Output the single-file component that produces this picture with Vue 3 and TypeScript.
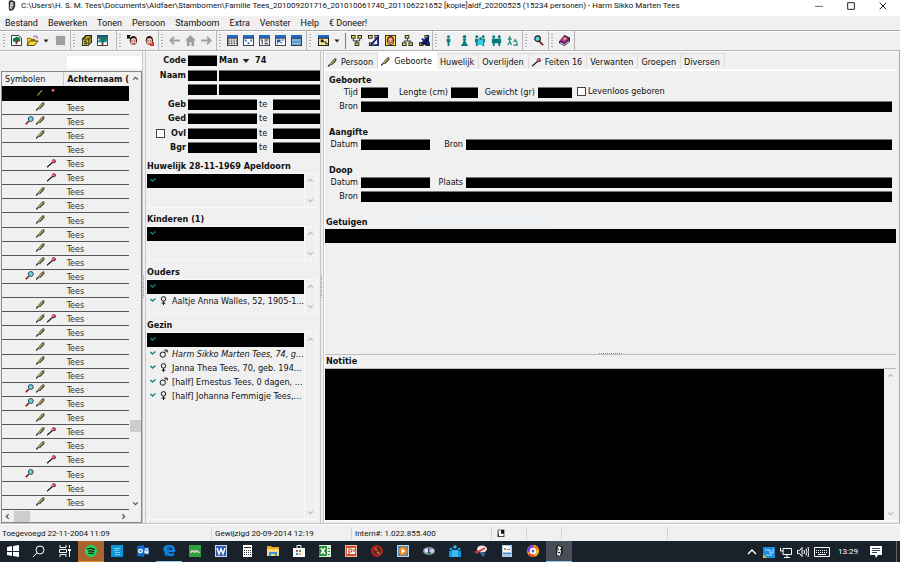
<script setup lang="ts">
import { ref } from 'vue'

interface Person { mark: string; text: string; own?: boolean }
interface Section { title: string; rows: Person[]; grow?: boolean }
interface Tool { icon: string; label: string; kind?: string }

const windowIcon = (inner: string, bg = '#fff') =>
  `<path fill="#334" d="M0 1h12v11H0z"/><path fill="#2468c8" d="M0 0h12v3H0z"/><path fill="${bg}" d="M1 4h10v7H1z"/>${inner}`
const face = '<ellipse cx="7" cy="6" rx="4" ry="5" fill="#2b1712"/><ellipse cx="7" cy="7" rx="3" ry="3.6" fill="#f2c0a8"/><path fill="#400" d="M5 6h1v1H5zM8 6h1v1H8z"/><path fill="#c22" d="M6 9h3v1H6z"/>'
const node = (x: number, y: number) => `<path fill="#222" d="M${x} ${y}h5v4h-5z"/><path fill="#e2da48" d="M${x + 1} ${y + 1}h3v2h-3z"/>`
const person = (x: number, s: string) => `<circle cx="${x}" cy="2" r="1.6" fill="${s}"/><path fill="${s}" d="M${x - 2} 4h4v4h-1v4h-2V8h-1z"/>`

const icons: Record<string, string> = {
  app: '<path fill="#333" d="M3 1l3-1 4 2v5l-2 4-4 1-1-3z"/><path fill="#ddd" d="M5 2l3 1v3l-2 4-2-1z"/><path fill="#222" d="M5 4h1v1H5zM7 4h1v1H7zM5 7h2v1H5z"/>',
  pen: '<path fill="#555" d="M0 12l1-3 7-8 3-1v3l-7 6-2 1z"/><path fill="#111" d="M0 12l1-3 2 1zM4 9l7-7v1.500L5 9.500z"/><path fill="#d8d030" d="M3 8l6-6 1 .8-6 6z"/>',
  penSel: '<path stroke="#c8c030" stroke-width="1.400" d="M2 10l6-7"/>',
  pin: '<path stroke="#111" stroke-width="1.400" d="M0 11l8-7"/><circle cx="9" cy="3" r="2.700" fill="#5c1060"/><circle cx="9" cy="3" r="1.700" fill="#e0249c"/><path fill="#f7c02c" d="M7 2h2v2H7z"/>',
  pinSel: '<circle cx="8" cy="3" r="2" fill="#c0249c"/><path fill="#f7c02c" d="M7 2h2v2H7z"/>',
  mag: '<path stroke="#7c1414" stroke-width="2.200" d="M1 11l4-4"/><circle cx="7.700" cy="4" r="3.300" fill="#5adbe0" stroke="#334" stroke-width="1.200"/>',
  treeDoc: '<path fill="#fff" stroke="#222" d="M.5.5h8l3 3v8H.5z"/><path fill="#127a3c" d="M3 3h2V2h3v1h2v4H8v1H4V7H2V5z"/><path fill="#833" d="M5 6h2v4H5z"/>',
  folder: '<path fill="#8a7410" d="M0 3h4l1 1h4v7H0z"/><path fill="#f8dc3c" d="M1 4h3v2h7l-3 4H1z"/><path fill="#f8dc3c" stroke="#443a08" d="M0 11.500h8l4-5H3z"/><path fill="none" stroke="#7a2ca0" d="M7 2q2-2 4 0v2"/>',
  square: '<path fill="#a0a0a0" d="M1 1h10v10H1z"/>',
  safe: '<path fill="#222" d="M1 4l4-4h7v8l-4 4H1z"/><path fill="#f2e23a" d="M2 5h6v6H2z"/><path fill="#b4a018" d="M3 4l3-3h5L8 4zM9 5l2-3v6l-2 2z"/><path fill="#222" d="M3 6h4v1H5v1h2v2H3V9h2V8H3z"/>',
  treeWin: '<path fill="#17557c" d="M0 0h12v3H0z"/><path fill="#fff" stroke="#222" d="M.5 3.500h11v8H.5z"/><path fill="#0c7d62" d="M2 6l2-3h6l1 3-2 2H3z"/><path fill="#733" d="M5 7h2v4H5z"/><path fill="#18a0c0" d="M1 6h4v2H1zM8 6h4v2H8z"/>',
  faceUp: face + '<path fill="#111" d="M0 0h4v1H3v1l2 2-1 1-2-2v1H0z"/>',
  faceDown: face + '<path fill="#e22" d="M12 12V7l-5 5z"/>',
  left: '<path fill="#a0a0a0" d="M0 6l5-5 1 2-2 2h8v2H4l2 2-1 2z"/>',
  house: '<path fill="#a0a0a0" d="M6 0l6 6h-2v6H7V8H5v4H2V6H0z"/>',
  right: '<path fill="#a0a0a0" d="M12 6L7 1 6 3l2 2H0v2h8L6 9l1 2z"/>',
  win1: windowIcon('<path stroke="#111" stroke-dasharray="2 1" d="M1 5.500h10M1 7.500h10M1 9.500h10"/>'),
  win2: windowIcon('<path fill="#36c" d="M2 5h2v2H2zM8 5h2v2H8zM5 8h2v2H5z"/>'),
  win3: windowIcon('<path fill="#123" d="M2 5h2v5H3V6H2zM6 5h4v1H6zM6 7h3v1H6zM6 9h4v1H6z"/>'),
  win4: windowIcon('<path fill="#25a" d="M2 5h4v3H3v2H2zM7 5h3v1H7zM6 8h2v1H6z"/>'),
  win5: windowIcon('<path stroke="#fff" stroke-dasharray="1 1" d="M1 5.500h10M1 9.500h10"/>', '#5a9ad0'),
  chart: '<path fill="#111" d="M0 0h12v12H0z"/><path fill="#2468c8" d="M0 0h12v3H0z"/><path fill="#f4e8a0" d="M1 4h10v7H1z"/><path fill="#111" d="M3 5h3v2h3v2h2v1H8V8H3z"/>',
  tree1: node(0, 0) + node(7, 0) + node(4, 8) + '<path fill="none" stroke="#222" d="M2.500 4v2.500h7V4M6 6v2"/>',
  tree2: node(0, 0) + node(7, 0) + node(1, 8) + '<path fill="none" stroke="#11227a" stroke-width="2" d="M3 11L11 2v9H6"/>',
  portrait: '<path fill="#222" d="M0 0h12v12H0z"/><path fill="#f4dc4a" d="M1 1h10v10H1z"/><ellipse cx="6" cy="6" rx="4" ry="5" fill="#722"/><ellipse cx="6" cy="6.500" rx="2.500" ry="3.500" fill="#f3bba0"/><path fill="#311" d="M4 6h1v1H4zM7 6h1v1H7zM5 8h2v1H5z"/>',
  tree3: node(3, 0) + node(0, 8) + node(7, 8) + '<path fill="none" stroke="#222" d="M6 4v2M2.500 8V6.500h7V8"/>',
  tree4: node(6, 0) + node(0, 8) + node(7, 8) + '<path stroke="#11227a" stroke-width="2" d="M2 10L10 2v9M3 4l7 6"/>',
  man: person(6, '#0b7c7c'),
  woman: '<circle cx="6" cy="2" r="2" fill="#0b7c7c"/><path fill="#0b7c7c" d="M4 4h4l-1 3 3 5H2l3-5z"/>',
  group: person(2, '#0b7c7c') + person(9, '#0b7c7c') + '<path fill="#3cc8ec" d="M3 5h6v6H3z"/><circle cx="6" cy="4" r="1.500" fill="#0b7c7c"/>',
  pair: person(3, '#0b7c7c') + person(9, '#0b7c7c') + '<path fill="#0b7c7c" d="M1 4h10v5H1z"/>',
  kids: '<g fill="none" stroke="#1a8c80" stroke-width="1.300"><path d="M3 1v6M1 5l2-2 2 2M1 11l2-4 2 4M9 4v4M7 7l2-1 2 1M7 11h4V8"/></g>',
  search: '<path stroke="#801818" stroke-width="2" d="M7 7l4 4"/><circle cx="5" cy="4" r="3" fill="#5adbe0" stroke="#222" stroke-width="1.300"/>',
  book: '<path fill="#32103c" d="M0 7l6-7 6 3v4l-6 5-6-3z"/><path fill="#a82aa0" d="M1 6l5-5 5 3-5 5z"/><path fill="#fff" d="M1 8l5 2 5-4v1l-5 4-5-2z"/><path fill="#f6d23a" d="M5 3h3v2H6v1H5z"/>',
  start: '<path fill="#fff" d="M0 2l5-1v5H0zM6 1l6-1v6H6zM0 7h5v4l-5-1zM6 7h6v5l-6-1z"/>',
  find: '<circle cx="7" cy="5" r="4" fill="none" stroke="#fff"/><path stroke="#fff" d="M4 8l-4 4"/>',
  task: '<g fill="none" stroke="#fff"><path d="M1 0v2.500h6V0M1 12V9.500h6V12M.5 4.500h7v3h-7zM10.500 0v3M10.500 6v6"/></g><path fill="#fff" d="M9 4h3v2H9z"/>',
  spotify: '<circle cx="6" cy="6" r="6" fill="#1ed760"/><g fill="none" stroke="#111" stroke-width="1.200"><path d="M2 4q4-1.500 8 .8M3 6.300q3-1 6.400.7M3 8.500q3-1 5.500.5"/></g>',
  tile: '<path fill="#0c96d8" d="M0 0h12v12H0z"/><path fill="none" stroke="#7dd0f4" d="M3 3.500h6M3 5.500h5M4 7.500h5M4 9.500h5"/>',
  outlook: '<path fill="#0a6cc8" d="M0 1l7-1v12l-7-1z"/><path fill="#fff" stroke="#0a6cc8" d="M7 3h5v6H7z"/><circle cx="3.500" cy="6" r="1.700" fill="none" stroke="#fff" stroke-width="1.300"/><path fill="none" stroke="#0a6cc8" d="M7 4l2.500 2L12 4"/>',
  edge: '<path fill="none" stroke="#0c83e0" stroke-width="2.600" d="M1 5q1-4 5-4 5 0 4.700 5H4q0 4 3.500 4 2 0 3.500-1"/><path fill="none" stroke="#0c83e0" stroke-width="1.500" d="M1 6q2-3 6-2.500M3 5q-2 4 1 6"/>',
  green: '<path fill="#2f9e3c" d="M0 0h12v12H0z"/><path fill="none" stroke="#e8c8d8" stroke-width="1.600" d="M2 8q0-3 2-2t2 2q0-3 2-2t2 2"/>',
  word: '<path fill="#c8d4ee" d="M0 0h12v12H0z"/><path fill="#2c5cb8" d="M1 1h10v10H1z"/><path fill="none" stroke="#fff" stroke-width="1.400" d="M2 3l2 6 2-5 2 5 2-6"/>',
  calc: '<path fill="#fff" d="M2 0h9v12H2z"/><path stroke="#333" d="M3 2.500h7"/><path stroke="#333" stroke-width="1.200" stroke-dasharray="1 1" d="M3 5.500h7M3 7.500h7M3 9.500h7"/>',
  explorer: '<path fill="#e8a818" d="M0 1h4l1 1h7v9H0z"/><path fill="#fcdc78" d="M0 4h12v7H0z"/><path fill="#3c94dc" d="M2 11V7h8v4H8V9H4v2z"/>',
  store: '<path fill="#fff" d="M0 3h12v9H0z"/><path fill="none" stroke="#fff" d="M4 3V.5h4V3"/><path fill="#e44" d="M3 5h2v2H3z"/><path fill="#3a4" d="M6 5h2v2H6z"/><path fill="#38d" d="M3 8h2v2H3z"/><path fill="#eb2" d="M6 8h2v2H6z"/>',
  excel: '<path fill="#d8efd8" d="M0 0h12v12H0z"/><path fill="#2c8c3c" d="M0 1h8v10H0z"/><path stroke="#fff" stroke-width="1.500" d="M2 3l4 6M6 3L2 9"/><path stroke="#2c8c3c" d="M9 3.500h2M9 6.500h2M9 9.500h2"/>',
  ppt: '<path fill="#f0b8a0" d="M0 0h12v12H0z"/><path fill="#d0502c" d="M1 1h10v10H1z"/><path fill="#fff" d="M2 3h8v6H2z"/><path fill="none" stroke="#d0502c" stroke-width="1.200" d="M4 9V4h2q2 1 0 3H4M9 4v3"/>',
  banned: '<circle cx="6" cy="6" r="5" fill="#5a2a20" stroke="#d02818" stroke-width="1.600"/><path stroke="#d02818" stroke-width="1.600" d="M2 2l8 8"/><path stroke="#caa" d="M5 3v2M7 7v2"/>',
  play: '<path fill="#b8d8f0" d="M0 0h12v12H0z"/><path fill="#4888c0" d="M1 1h10v10H1z"/><circle cx="6" cy="6" r="4.500" fill="#f08418"/><path fill="#fff" d="M4.500 3l4 3-4 3z"/>',
  disks: '<ellipse cx="6" cy="6" rx="6" ry="4" fill="#8896b0"/><circle cx="3.500" cy="5.500" r="2" fill="#e0e8f4"/><circle cx="9" cy="6" r="2" fill="#c8d0e8"/><path fill="#346" d="M5 3h1v6H5z"/><path fill="#4a8a50" d="M6 7h2v3H6z"/>',
  people: '<g fill="#1498e0"><circle cx="2" cy="4" r="1.500"/><circle cx="10" cy="4" r="1.500"/><path d="M0 6h4v6H0zM8 6h4v6H8z"/></g><circle cx="6" cy="2" r="1.700" fill="#38b8f4"/><path fill="#38b8f4" d="M3 5h6v7H3z"/>',
  snip: '<ellipse cx="7" cy="4" rx="5" ry="3.500" fill="#f4e4e4"/><path stroke="#c83838" stroke-width="1.500" d="M1 8l9-5"/><path stroke="#2878b8" stroke-width="1.500" d="M5 7l4 4M10 8l-3 3"/><circle cx="1.500" cy="7" r="1.500" fill="#c83838"/>',
  paper: '<path fill="#a8cce8" d="M1 0h10v12H1z"/><path fill="#fff" d="M2 1h7l1 6H2z"/><path fill="#e07828" d="M3 3h2v2H3z"/><path stroke="#4880b0" d="M2 8.500h8M6 4.500h3"/>',
  photos: '<circle cx="6" cy="6" r="6" fill="#f4b820"/><path fill="#7c3ce0" d="M0 6a6 6 0 0 1 6-6l1 3-4 5z"/><path fill="#e84040" d="M1 9l5-1 2 4q-5 1-7-3z"/><path fill="#f88018" d="M6 0q5 0 6 5l-4 1z"/><circle cx="6" cy="6" r="3.200" fill="#fff"/><circle cx="6" cy="6" r="1.500" fill="#5468c0"/>',
  head: '<path fill="#222" d="M3 1l3-1 4 2v5l-2 4-4 1-1-3z"/><path fill="#e4e4dc" d="M5 1l3 1v4l-1 5-3-1z"/><path fill="#222" d="M5 4h1v1H5zM7 4h1v1H7zM5 7h2v1H5z"/>',
  up: '<path fill="none" stroke="#fff" stroke-width="1.300" d="M2 8l4-4 4 4"/>',
  globe: '<path fill="#168cdc" d="M0 1h12v11H0z"/><path fill="none" stroke="#b8e4fc" d="M2 4h5v3h3V3M3 9h6"/><path fill="#e8b838" d="M0 8l4 4H0z"/>',
  net: '<path fill="none" stroke="#fff" d="M3 2.500h8.500v6H3zM7 9v2M4 11.500h6M.5 2v3h3"/>',
  sound: '<path fill="none" stroke="#fff" d="M.5 4.500h2l2.500-3v9l-2.500-3h-2zM7 4q1 2 0 4M9 2.500q2 3.500 0 7M11 1q2 5 0 10"/>',
  keyboard: '<path fill="none" stroke="#fff" d="M.5.5h15v9H.5z"/><path stroke="#fff" stroke-dasharray="1 1" d="M2 3.500h12M2 5.500h12"/><path stroke="#fff" d="M4 7.500h8"/>',
  note: '<path fill="#fff" d="M0 0h12v9H8l-2 3-1-3H0z"/><path stroke="#345" d="M2 2.500h8M2 4.500h8M2 6.500h5"/>',
  check: '<path fill="none" stroke="#0c8484" stroke-width="2.800" d="M1 4l4 4 6-5"/>',
  male: '<g fill="none" stroke="#111" stroke-width="1.300"><circle cx="5" cy="7.500" r="3.500"/><path d="M7.500 5L10 2.500M7 1.500h4v3"/></g>',
  female: '<g fill="none" stroke="#111" stroke-width="1.300"><circle cx="6" cy="3.800" r="3"/><path d="M6 7v5M3.500 9.500h5"/></g>',
  tri: '<path fill="#222" d="M1 3h10l-5 6z"/>',
  chevUp: '<path fill="none" stroke="currentColor" stroke-width="2.200" d="M2 8l4-4 4 4"/>',
  chevDown: '<path fill="none" stroke="currentColor" stroke-width="2.200" d="M2 4l4 4 4-4"/>',
  chevLeft: '<path fill="none" stroke="currentColor" stroke-width="2.200" d="M8 2L4 6l4 4"/>',
  chevRight: '<path fill="none" stroke="currentColor" stroke-width="2.200" d="M4 2l4 4-4 4"/>',
  min: '<path stroke="#222" d="M0 6.500h12"/>',
  max: '<path fill="none" stroke="#222" stroke-width="1.500" d="M1 1h10v10H1z"/>',
  close: '<path fill="none" stroke="#222" stroke-width="1.500" d="M1 1l10 10M11 1L1 11"/>',
  disk: '<path fill="#111" d="M1 1h10v11H1z"/><path fill="#fff" d="M2 2h4v5h4v4H3z"/>'
}

const title = 'C:\\Users\\H. S. M. Tees\\Documents\\Aldfaer\\Stambomen\\Familie Tees_201009201716_201010061740_201106221652 [kopie]aldf_20200525 (15234 personen) - Harm Sikko Marten Tees'
const menus = ['Bestand', 'Bewerken', 'Tonen', 'Persoon', 'Stamboom', 'Extra', 'Venster', 'Help', '€ Doneer!']

const t = (icon: string, label: string, kind?: string): Tool => ({ icon, label, kind })
const toolGroups: { cls?: string; tools: Tool[] }[] = [
  { tools: [t('treeDoc', 'Nieuw'), t('folder', 'Openen'), t('tri', 'Recent', 'drop'), t('square', 'Opslaan')] },
  { cls: 'ruled loose', tools: [t('safe', 'Archief'), t('treeWin', 'Stamboom')] },
  { cls: 'ruled', tools: [t('faceUp', 'Ouder'), t('faceDown', 'Kind')] },
  { cls: 'ruled', tools: [t('left', 'Vorige'), t('house', 'Begin'), t('right', 'Volgende')] },
  { cls: 'ruled', tools: [t('win1', 'Tabel'), t('win2', 'Relaties'), t('win3', 'Lijst'), t('win4', 'Overzicht'), t('win5', 'Raster')] },
  { cls: 'ruled wide', tools: [t('chart', 'Grafiek'), t('tri', 'Grafiek kiezen', 'drop bar'), t('tree1', 'Kwartierstaat'), t('tree2', 'Stamreeks'), t('portrait', 'Portret'), t('tree3', 'Parenteel'), t('tree4', 'Genealogie')] },
  { cls: 'ruled', tools: [t('man', 'Man'), t('woman', 'Vrouw'), t('group', 'Gezin'), t('pair', 'Paar'), t('kids', 'Kinderen')] },
  { cls: 'ruled', tools: [t('search', 'Zoeken')] },
  { cls: 'ruled', tools: [t('book', 'Handleiding')] }
]

const symbols = ['pn', 'p', 'mp', 'p', '', 'n', 'n', 'p', 'p', 'p', 'p', 'p', 'pn', 'mp', '', 'p', 'pn', 'p', 'p', 'p', 'p', 'mp', 'mp', 'p', 'pn', 'p', 'n', 'm', 'n', 'p']
const symbolSet: [string, string][] = [['m', 'mag'], ['p', 'pen'], ['n', 'pin']]

const sections: Section[] = [
  { title: 'Huwelijk 28-11-1969 Apeldoorn', rows: [] },
  { title: 'Kinderen (1)', rows: [] },
  { title: 'Ouders', rows: [{ mark: 'female', text: 'Aaltje Anna Walles, 52, 1905-1...' }] },
  {
    title: 'Gezin', grow: true, rows: [
      { mark: 'male', text: 'Harm Sikko Marten Tees, 74, g...', own: true },
      { mark: 'female', text: 'Janna Thea Tees, 70, geb. 194...' },
      { mark: 'male', text: '[half] Ernestus Tees, 0 dagen, ...' },
      { mark: 'female', text: '[half] Johanna Femmigje Tees,...' }
    ]
  }
]

const tabs = [
  { name: 'Persoon', icon: 'pen' }, { name: 'Geboorte', icon: 'pen' }, { name: 'Huwelijk' }, { name: 'Overlijden' },
  { name: 'Feiten 16', icon: 'pin' }, { name: 'Verwanten' }, { name: 'Groepen' }, { name: 'Diversen' }
]
const activeTab = ref('Geboorte')

const taskButtons = ['start', 'find', 'task', 'spotify', 'tile', 'outlook', 'edge', 'green', 'word', 'calc', 'explorer', 'store', 'excel', 'ppt', 'banned', 'play', 'disks', 'people', 'snip', 'paper', 'photos', 'head']
</script>

<template>
  <div class="app">
    <header class="titlebar">
      <svg class="i12" viewBox="0 0 12 12" v-html="icons.app" />
      <h1>{{ title }}</h1>
      <div class="winbtns">
        <button v-for="b in ['min', 'max', 'close']" :key="b" :aria-label="b"><svg class="i8" viewBox="0 0 12 12" v-html="icons[b]" /></button>
      </div>
    </header>
    <nav class="menu"><button v-for="m in menus" :key="m">{{ m }}</button></nav>
    <div class="toolbar">
      <div v-for="(g, i) in toolGroups" :key="i" class="group" :class="g.cls">
        <i class="grip" />
        <button v-for="b in g.tools" :key="b.label" :aria-label="b.label" :class="b.kind"><svg viewBox="0 0 12 12" v-html="icons[b.icon]" /></button>
      </div>
    </div>

    <main class="main">
      <section class="left">
        <input class="filter" aria-label="Filter achternaam">
        <div class="gridbox">
          <div class="gridmain">
            <table>
              <thead><tr><th class="sym">Symbolen</th><th class="name">Achternaam (</th></tr></thead>
              <tbody>
                <tr v-for="(s, i) in symbols" :key="i" :class="{ sel: i === 0 }">
                  <td><div class="marks">
                    <span v-for="[k, ic] in symbolSet" :key="k"><svg v-if="s.includes(k)" viewBox="0 0 12 12" v-html="icons[i ? ic : ic + 'Sel']" /></span>
                  </div></td>
                  <td class="name">{{ i ? 'Tees' : '' }}</td>
                </tr>
              </tbody>
            </table>
            <div class="vbar dark">
              <svg viewBox="0 0 12 12" v-html="icons.chevUp" /><i class="run" /><i class="thumb" /><i class="rest" /><svg viewBox="0 0 12 12" v-html="icons.chevDown" />
            </div>
          </div>
          <div class="hbar">
            <svg viewBox="0 0 12 12" v-html="icons.chevLeft" /><i class="thumb" /><svg class="end" viewBox="0 0 12 12" v-html="icons.chevRight" />
          </div>
        </div>
      </section>
      <div class="split"><i /></div>

      <section class="middle">
        <div class="pair">
          <div class="frow">
            <label for="code">Code</label><input id="code" class="red short">
            <select aria-label="Geslacht"><option>Man</option><option>Vrouw</option></select>
            <svg class="caret" viewBox="0 0 12 12" v-html="icons.tri" /><b class="age">74</b>
          </div>
        </div>
        <div class="pair">
          <div class="frow"><label for="naam">Naam</label><input id="naam" class="red short"><input class="red fill" aria-label="Voornamen"></div>
          <div class="frow"><label /><input class="red short" aria-label="Voorvoegsel"><input class="red fill" aria-label="Achternaam"></div>
        </div>
        <div class="pair">
          <div v-for="f in ['Geb', 'Ged']" :key="f" class="frow">
            <label :for="f">{{ f }}</label><input :id="f" class="red date"><label class="te" :for="f + 'p'">te</label><input :id="f + 'p'" class="red fill">
          </div>
        </div>
        <div class="pair">
          <div v-for="f in ['Ovl', 'Bgr']" :key="f" class="frow">
            <input v-if="f === 'Ovl'" type="checkbox" aria-label="Overleden"><label :for="f">{{ f }}</label><input :id="f" class="red date"><label class="te" :for="f + 'p'">te</label><input :id="f + 'p'" class="red fill">
          </div>
        </div>
        <div v-for="s in sections" :key="s.title" class="sec" :class="{ grow: s.grow }">
          <h2>{{ s.title }}</h2>
          <div class="listbox">
            <ul>
              <li class="sel"><svg class="ck" viewBox="0 0 12 12" v-html="icons.check" /></li>
              <li v-for="r in s.rows" :key="r.text" :class="{ own: r.own }">
                <svg class="ck" viewBox="0 0 12 12" v-html="icons.check" /><svg class="sex" viewBox="0 0 12 12" v-html="icons[r.mark]" /><span>{{ r.text }}</span>
              </li>
            </ul>
            <div class="vbar"><svg viewBox="0 0 12 12" v-html="icons.chevUp" /><i class="space" /><svg viewBox="0 0 12 12" v-html="icons.chevDown" /></div>
          </div>
        </div>
      </section>
      <div class="split"><i /></div>

      <section class="right">
        <div class="tabs" role="tablist">
          <button v-for="tb in tabs" :key="tb.name" role="tab" :aria-selected="tb.name === activeTab" :class="{ on: tb.name === activeTab }" @click="activeTab = tb.name">
            <svg v-if="tb.icon" viewBox="0 0 12 12" v-html="icons[tb.icon]" />{{ tb.name }}
          </button>
        </div>
        <div class="sheet">
          <div class="block">
            <h2>Geboorte</h2>
            <div class="drow">
              <label for="tijd">Tijd</label><input id="tijd" class="red w27">
              <label class="l60" for="lengte">Lengte (cm)</label><input id="lengte" class="red w27">
              <label class="l55" for="gewicht">Gewicht (gr)</label><input id="gewicht" class="red w34">
              <label class="tick"><input type="checkbox">Levenloos geboren</label>
            </div>
            <div class="drow"><label for="gbron">Bron</label><input id="gbron" class="red fill"></div>
          </div>
          <div class="block">
            <h2>Aangifte</h2>
            <div class="drow"><label for="adatum">Datum</label><input id="adatum" class="red w69"><label class="l30" for="abron">Bron</label><input id="abron" class="red fill"></div>
          </div>
          <div class="block">
            <h2>Doop</h2>
            <div class="drow"><label for="ddatum">Datum</label><input id="ddatum" class="red w69"><label class="l30" for="dplaats">Plaats</label><input id="dplaats" class="red fill"></div>
            <div class="drow"><label for="dbron">Bron</label><input id="dbron" class="red fill"></div>
          </div>
          <div class="witness"><h2>Getuigen</h2><i class="ghost" /><div class="strip" /></div>
          <div class="hsplit"><i /></div>
          <label class="notelabel" for="notitie">Notitie</label>
          <div class="notebox">
            <textarea id="notitie" />
            <div class="vbar"><svg viewBox="0 0 12 12" v-html="icons.chevUp" /><i class="space" /><svg viewBox="0 0 12 12" v-html="icons.chevDown" /></div>
          </div>
        </div>
      </section>
    </main>

    <footer class="status">
      <span class="s1">Toegevoegd 22-11-2004 11:09</span>
      <span class="s2">Gewijzigd 20-09-2014 12:19</span>
      <span class="s2">Intern#: 1.022.855.400</span>
      <span class="s3"><svg viewBox="0 0 12 12" v-html="icons.disk" /></span>
      <span class="s3" /><span class="s4" /><span class="s5" />
    </footer>
    <div class="taskbar">
      <button v-for="b in taskButtons" :key="b" :class="b" :aria-label="b"><svg viewBox="0 0 12 12" v-html="icons[b]" /></button>
      <div class="tray">
        <svg v-for="b in ['up', 'globe', 'net', 'sound']" :key="b" viewBox="0 0 12 12" v-html="icons[b]" />
        <svg class="kb" viewBox="0 0 16 10" v-html="icons.keyboard" />
        <time>13:29</time>
        <svg viewBox="0 0 12 12" v-html="icons.note" />
        <i class="peek" />
      </div>
    </div>
  </div>
</template>

<style>
body { margin: 0; background: #f0f0f0; }
</style>

<style scoped>
.app, .app * { box-sizing: border-box; }
.app { min-height: 100vh; display: flex; flex-direction: column; background: #f0f0f0; color: #111; font: 9px/11px "DejaVu Sans Condensed", "DejaVu Sans", sans-serif; white-space: nowrap; }
button, input, select, textarea { font: inherit; color: inherit; margin: 0; padding: 0; border: 0; background: none; border-radius: 0; }
svg { display: block; flex: none; }
h1, h2, ul { margin: 0; padding: 0; font-size: 9px; }
.i12 { width: 11px; height: 11px; }
.i8 { width: 8px; height: 8px; }

.titlebar { display: flex; align-items: center; height: 16px; padding: 0 13px 5px 6px; background: #fff; font-family: Roboto, sans-serif; }
.titlebar h1 { flex: 1; min-width: 0; overflow: hidden; margin-left: 4px; font-size: 8px; font-weight: 400; }
.winbtns { display: flex; gap: 24px; }
.menu { display: flex; align-items: center; gap: 10px; height: 14px; padding: 0 5px; font-family: Roboto, sans-serif; }
.toolbar { display: flex; height: 21px; border-top: 1px solid #a8a8a8; border-bottom: 1px solid #b4b4b4; box-shadow: inset 0 1px #fff; }
.group { display: flex; align-items: center; padding-right: 2px; }
.group button { width: 16px; height: 16px; display: grid; place-items: center; }
.group svg { width: 11px; height: 11px; }
.group .drop { width: 12px; }
.group .drop svg { width: 6px; height: 6px; }
.group .bar { width: 15px; padding-right: 3px; border-right: 1px solid #777; margin-right: 1px; }
.group.loose { padding-right: 6px; }
.group.wide { gap: 1px; padding-right: 0; }
.wide .drop { width: 14px; }
.wide .grip { margin-right: 3px; }
.ruled { box-shadow: inset 1px 0 #b8b8b8; }
.group:last-child { border-right: 1px solid #b0b0b0; }
.grip { width: 2px; height: 13px; margin: 0 3px; background: repeating-linear-gradient(#b0b0b0 0 1px, transparent 1px 3px); }

.main { flex: 1; display: flex; min-height: 0; border-bottom: 1px solid #c0c0c0; box-shadow: inset 0 1px #fff; }
.left { width: 142px; display: flex; flex-direction: column; padding: 5px 0 0 1px; }
.filter { height: 13px; margin: 0 0 2px 66px; background: #fff; }
.gridbox { flex: 1; display: flex; flex-direction: column; border: 1px solid #888; }
.gridmain { flex: 1; display: flex; }
table { flex: 1; height: 100%; border-collapse: collapse; table-layout: fixed; margin-bottom: 3px; }
th { height: 14px; padding: 1px 0 0 3px; font-weight: 400; text-align: left; line-height: 11px; }
th.sym { width: 63px; border-right: 1px solid #ccc; }
th.name { font-weight: 700; overflow: hidden; }
td { padding: 0; height: 14px; line-height: 11px; border-bottom: 1px solid #555; }
td.name { padding: 2px 0 0 3px; color: #333; }
.marks { display: flex; gap: 1px; padding-left: 23px; }
.marks span { width: 10px; height: 10px; }
.marks svg { width: 9px; height: 9px; }
tr.sel td { background: #000; border-color: #000; }
.vbar { display: flex; flex-direction: column; align-items: center; width: 12px; padding: 3px 0; color: #bbb; }
.vbar svg { width: 7px; height: 7px; }
.vbar.dark, .hbar { color: #555; }
.dark .run { flex: 335; }
.dark .rest { flex: 68; }
.dark .thumb { width: 11px; height: 12px; background: #cdcdcd; }
.space { flex: 1; }
.hbar { display: flex; align-items: center; height: 12px; padding: 0 14px 0 2px; }
.hbar svg { width: 7px; height: 7px; }
.hbar .thumb { width: 16px; height: 11px; margin-left: 3px; background: #cdcdcd; }
.hbar .end { margin-left: auto; }

.split { width: 4px; display: flex; align-items: center; border-left: 1px solid #c4c4c4; border-right: 1px solid #c8c8c8; }
.split i { width: 1px; height: 24px; background: repeating-linear-gradient(#999 0 1px, transparent 1px 2px); }

.middle { width: 174px; display: flex; flex-direction: column; padding: 4px 0 3px 1px; }
.pair { display: flex; flex-direction: column; gap: 3px; margin-bottom: 4px; }
.frow { display: flex; align-items: center; height: 11px; gap: 2px; }
.frow > label:not(.te) { flex: none; width: 39px; text-align: right; font-weight: 700; }
.frow > input[type=checkbox] { margin-left: 9px; }
.frow > input[type=checkbox] + label:not(.te) { width: 19px; }
.te { width: 12px; }
.red { height: 11px; background: #000; border-top: 1px solid #777; min-width: 0; color: #fff; }
.short { width: 29px; }
.date { width: 69px; }
.fill { flex: 1; }
select { appearance: none; width: 21px; height: 11px; font-weight: 700; }
.caret { width: 8px; height: 8px; margin-right: 3px; }
.age { font-weight: 700; }
input[type=checkbox] { appearance: none; flex: none; width: 9px; height: 9px; background: #fff; border: 1px solid #444; }
.sec h2 { height: 18px; padding-top: 6px; }
.pair + .sec { margin-top: -2px; }
.listbox { display: flex; height: 35px; margin-right: 3px; border: 1px solid #fafafa; border-left: 0; }
.listbox ul { flex: 1; min-width: 0; list-style: none; }
.listbox li { display: flex; align-items: center; height: 14px; padding-left: 3px; overflow: hidden; }
.listbox .vbar { border-left: 1px solid #fafafa; }
.listbox .sel { background: #000; }
.ck { width: 6px; height: 6px; margin-bottom: 3px; }
.sex { width: 9px; height: 9px; margin: 0 4px 1px 3px; }
.own { font-style: italic; }
.grow { flex: 1; display: flex; flex-direction: column; }
.grow .listbox { flex: 1; height: auto; }

.right { flex: 1; min-width: 0; display: flex; flex-direction: column; padding: 1px 3px 2px 0; border-left: 1px solid #fff; border-right: 1px solid #aaa; }
.tabs { display: flex; align-items: flex-end; height: 17px; }
.tabs button { display: flex; align-items: center; gap: 4px; height: 16px; padding: 2px 4px 0 3px; border: 1px solid #ddd; border-left: 0; border-bottom: 0; }
.tabs button.on { height: 17px; padding-bottom: 2px; background: #fff; border-color: #fff; }
.tabs svg { width: 9px; height: 9px; }
.sheet { flex: 1; display: flex; flex-direction: column; border-top: 2px solid #fff; border-bottom: 1px solid #fff; }
.sheet h2 { height: 14px; padding-top: 2px; }
.block { padding-right: 4px; margin-bottom: 13px; }
.block:first-child { margin-top: 2px; }
.block h2 { padding-left: 4px; }
.drow { display: flex; align-items: center; gap: 3px; height: 11px; }
.drow + .drow { margin-top: 3px; }
.drow label { width: 33px; text-align: right; }
.drow .l30 { width: 30px; }
.drow .l60 { width: 57px; }
.drow .l55 { width: 54px; }
.drow .tick { display: flex; align-items: center; gap: 2px; width: auto; margin-left: 2px; margin-bottom: 2px; }
.w27 { width: 27px; }
.w34 { width: 34px; }
.w69 { width: 69px; }
.witness { position: relative; flex: 139; }
.witness h2 { padding-left: 1px; }
.ghost { position: absolute; left: 79px; top: 3px; width: 147px; height: 12px; background: #edf0f2; }
.strip { position: relative; height: 14px; background: #000; }
.hsplit { display: flex; justify-content: center; height: 2px; border-bottom: 1px solid #c0c0c0; }
.hsplit i { width: 24px; height: 1px; background: repeating-linear-gradient(90deg, #888 0 1px, transparent 1px 2px); }
.notelabel { height: 13px; padding: 1px; font-weight: 700; }
.notebox { flex: 153; display: flex; border-top: 1px solid #bbb; }
.notebox textarea { flex: 1; display: block; background: #000; color: #fff; resize: none; }

.status { display: flex; align-items: center; height: 17px; padding: 2px 0; border-top: 1px solid #fff; font-family: Roboto, sans-serif; font-size: 8px; }
.status span { height: 13px; padding-left: 3px; display: flex; align-items: center; border-right: 1px solid #d4d4d4; }
.status .s1 { width: 212px; padding-left: 2px; }
.status .s2 { width: 140px; }
.status .s3 { width: 35px; padding-left: 5px; }
.status .s4 { width: 106px; }
.status .s5 { flex: 1; border: 0; }
.status svg { width: 8px; height: 8px; }
.taskbar { display: flex; height: 21px; background: #19212b; color: #fff; font-family: Roboto, sans-serif; font-size: 8px; }
.taskbar button { width: 26px; display: grid; place-items: center; border-bottom: 1px solid transparent; }
.taskbar svg { width: 12px; height: 12px; }
.taskbar .spotify { background: #a8642c; border-color: #f08828; }
.taskbar .edge { border-color: #8cc8f0; }
.taskbar .head { background: #484e58; border-color: #8cc8f0; }
.tray { display: flex; align-items: center; gap: 5px; margin-left: auto; }
.tray .kb { width: 16px; height: 10px; }
.tray time { margin: 0 7px 0 3px; }
.peek { width: 1px; height: 21px; margin: 0 3px 0 9px; background: #666; }
</style>
